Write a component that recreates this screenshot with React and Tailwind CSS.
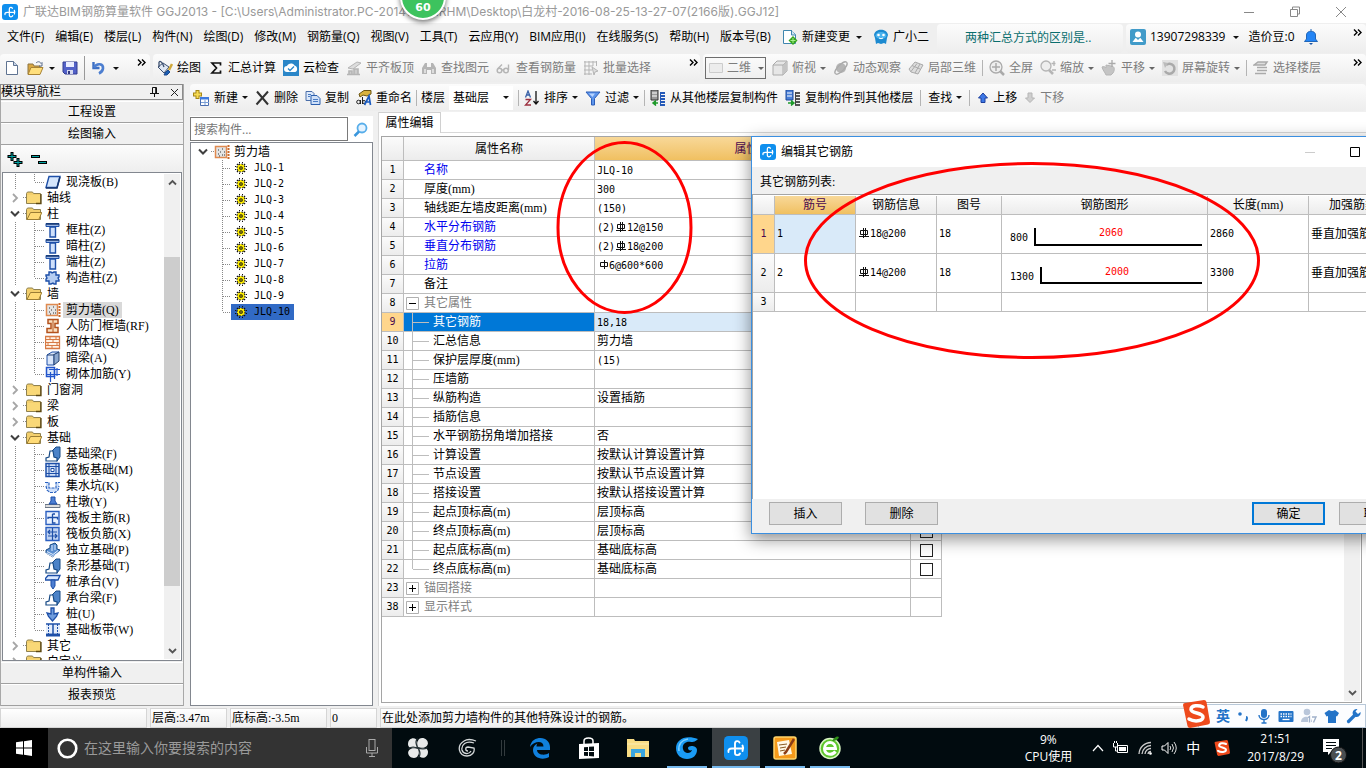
import React from "react";

const UI = "font-['Open_Sans','Noto_Sans_CJK_SC',sans-serif]";
const SONG = "font-['Liberation_Serif','Noto_Sans_CJK_SC',serif]";
const MONO = "font-['DejaVu_Sans_Mono',monospace] text-[10px]";

const isAscii = (s) => /^[\x20-\x7e]*$/.test(s);

/* ---------- shared pieces ---------- */

function Svg({ w = 16, h = 16, children, className = "" }) {
  return (
    <svg width={w} height={h} viewBox={`0 0 ${w} ${h}`} className={`shrink-0 ${className}`} aria-hidden="true">
      {children}
    </svg>
  );
}

const Caret = ({ color = "#111" }) => (
  <Svg w={6} h={3}><path d="M0 0h6L3 3z" fill={color} /></Svg>
);

const More = () => (
  <button aria-label="更多" className="self-start pt-[4px]">
    <Svg w={9} h={7}><path d="M1 .5l3 3-3 3M5 .5l3 3-3 3" fill="none" stroke="#000" strokeWidth="1.400" /></Svg>
  </button>
);

const Sep = ({ className = "" }) => <span className={`h-4 w-px shrink-0 bg-[#b4b4b4] ${className}`} />;

function Tool({ icon, label, caret, disabled }) {
  return (
    <button className={`flex shrink-0 items-center gap-1 whitespace-nowrap ${disabled ? "text-[#7d7d7d]" : "text-black"}`}>
      {icon}
      <span>{label}</span>
      {caret && <Caret color={disabled ? "#666" : "#111"} />}
    </button>
  );
}

function Song({ children, className = "" }) {
  return <span className={`${isAscii(children) ? MONO : SONG} whitespace-pre ${className}`}>{children}</span>;
}

function AppLogo({ s = 16 }) {
  return (
    <svg width={s} height={s} viewBox="0 0 24 24" className="shrink-0" aria-hidden="true">
      <rect width="24" height="24" rx="4.500" fill="#0f8fee" />
      <path d="M15.500 6.500c-.8-2-4.500-2-4.500 1v9.500c0 2.800 4 2.800 5 .5M18.500 12.500H8c-3 0-4 1.500-3.500 3.500M18.500 9.500c.8 1.500.8 4 0 5.500" fill="none" stroke="#fff" strokeWidth="1.900" strokeLinecap="round" />
    </svg>
  );
}

/* ---------- toolbar icons ---------- */

const G = "#b5b5b5";
const I = {
  file: <Svg w={12}><path d="M.5 1.500h7l4 4v9H.5z" fill="#fff" stroke="#5f7391" /><path d="M7.500 1.500v4h4" fill="#c7d4e8" stroke="#5f7391" /></Svg>,
  open: <Svg w={17}><path d="M1 14V4h5l1 2h6v3" fill="#d9a741" stroke="#8d7440" /><path d="M1 14.500l3-7h12l-3 7z" fill="#ffdf7c" stroke="#a88335" /><path d="M9 3c2-2 4-1.500 5 .5l1-1v3.500h-3" fill="none" stroke="#5a6d8c" /></Svg>,
  save: <Svg><path d="M1 2h14v12H3l-2-2z" fill="#5261c8" stroke="#323c91" /><path d="M4 2h8v5H4z" fill="#e9ecff" /><path d="M5 10h6v4H5z" fill="#d5d9f0" /><path d="M6 11h2v3H6z" fill="#333a80" /></Svg>,
  undo: <Svg w={14}><path d="M2.500 2v6h6" fill="none" stroke="#3c6fc4" strokeWidth="2.400" /><path d="M3 7.500C6 2.500 12.500 3.500 12 8.500c-.3 2.500-2 4-4 5" fill="none" stroke="#4c7ed0" strokeWidth="2.600" /></Svg>,
  paint: <Svg><path d="M1 7l5-4 6 4-5 6z" fill="#dfe7f3" stroke="#3b4f70" /><path d="M2 2c2-2 4 2 5 5M2 2v5" fill="none" stroke="#3b4f70" strokeWidth="1.300" /><path d="M8 13l3-3 2 2-3 3H7z" fill="#1c5fb3" stroke="#1c4a8f" /><path d="M15 4l-3 6" stroke="#d0a83a" strokeWidth="2.500" /></Svg>,
  sigma: <Svg><path d="M12.500 5.500V3H4l4.500 5L4 13h8.500v-2.500" fill="none" stroke="#111" strokeWidth="1.700" /></Svg>,
  cloud: <Svg><path d="M0 0h16v16H0z" fill="#2a86c8" /><path d="M4 12a3 3 0 010-6c1-3 6-3.500 7.500-.5C15 6 15 12 12 12z" fill="#fff" /><path d="M5 8.500l2 2 4-4" stroke="#2a86c8" fill="none" strokeWidth="1.300" /></Svg>,
  align: <Svg><path d="M2 8l9-6 4 1-8 6z" fill="#ddd" stroke={G} /><path d="M3 15v-4h3v4M8 15V9h4v6M1 14.500h13" fill="#ccc" stroke={G} strokeWidth="1.600" /></Svg>,
  binoc: <Svg><path d="M1 14V8l3-5h2v4h4V3h2l3 5v6h-5v-4H6v4z" fill={G} /><path d="M3 9h2v4H3zM11 9h2v4h-2z" fill="#ddd" /></Svg>,
  glass: <Svg><circle cx="3.500" cy="10.500" r="2.300" fill="none" stroke={G} strokeWidth="1.500" /><circle cx="10" cy="10.500" r="2.300" fill="none" stroke={G} strokeWidth="1.500" /><path d="M2 8.500l4-4M12.500 10V4.500M6 10h2" fill="none" stroke={G} strokeWidth="1.400" /></Svg>,
  batch: <Svg><path d="M1 2h13M1 6h9M1 10h8M1 14h8M2 1v14M6 1v14M10 1v5M13.500 1v5" stroke={G} fill="none" /><path d="M9 7l6 4-3 1-1 3z" fill="#ddd" stroke={G} /></Svg>,
  cube: <Svg><path d="M1 5l4-4h10v10l-4 4H1z" fill="#e6e6e6" stroke="#aaa" /><path d="M1 5h10v10M11 5l4-4" fill="none" stroke="#aaa" /><path d="M11 5l4-4v10l-4 4z" fill="#c4c4c4" /></Svg>,
  orbit: <Svg><circle cx="8" cy="8" r="5" fill={G} /><ellipse cx="8" cy="8" rx="8" ry="3" transform="rotate(-45 8 8)" fill="none" stroke="#aaa" strokeWidth="1.300" /></Svg>,
  local3d: <Svg><path d="M1 9l6-7 8 3-5 9-7-2z" fill="#ddd" stroke="#aaa" /><path d="M4 5.500l8 3.500M3 11.500l6-8M7 13l5-9" stroke="#aaa" fill="none" /></Svg>,
  full: <Svg><circle cx="7" cy="7" r="6" fill="#eee" stroke="#aaa" strokeWidth="1.300" /><path d="M7 3v8M3 7h8" stroke="#aaa" strokeWidth="1.500" /><path d="M11 11l4 4" stroke="#aaa" strokeWidth="2.500" /></Svg>,
  zoom: <Svg><circle cx="6" cy="6" r="5" fill="#eee" stroke={G} strokeWidth="1.300" /><path d="M9 10l4 4" stroke={G} strokeWidth="2.500" /><path d="M14 1v5M11.500 3.500h4M12 10h4" stroke={G} strokeWidth="1.300" /></Svg>,
  pan: <Svg><path d="M1 7c2-1 3 0 4 1V5l5 1c4 0 4 4 2 7l-2 2H5c-1-3-3-4-4-8z" fill="#c4c4c4" stroke={G} /><path d="M11 0v7M7.500 3.500h7" stroke="#aaa" strokeWidth="1.300" /></Svg>,
  rotate: <Svg><path d="M0 0h16v16H0z" fill="#e2e2e2" /><path d="M4 5a5 5 0 11-1 6" fill="none" stroke="#aaa" strokeWidth="2.500" /><path d="M1 2l5 1-3 5z" fill="#bbb" /></Svg>,
  floors: <Svg><path d="M1 5l4-3h9l-2 3zM4 7.500h10M4 10.500h10M2 13.500h11" fill="#ddd" stroke="#aaa" strokeWidth="1.500" /></Svg>,
  add: <Svg w={17}><path d="M4.500 0v9M0 4.500h9" stroke="#a68716" strokeWidth="4" /><path d="M4.500 1v7M1 4.500h7" stroke="#f7dc55" strokeWidth="2" /><path d="M7.500 7.500h8v8h-8z" fill="#fff" stroke="#496db0" /><path d="M7 7h9v2.500H7z" fill="#3d7ae0" /><path d="M8 12.500h8M12 10v5" stroke="#7b9fd6" /></Svg>,
  del: <Svg w={15}><path d="M2 1.500l11 13M13 1.500L1.500 14.500" stroke="#333" strokeWidth="2" /></Svg>,
  copy: <Svg><path d="M1 1.500h6l2 2v7H1z" fill="#dce9fb" stroke="#4a6ea8" /><path d="M6 5.500h6l3 3v6H6z" fill="#cfe0f8" stroke="#2b5fae" /><path d="M8 9.500h5M8 11.500h5M3 4.500h3M3 6.500h2" stroke="#4a7cc4" /></Svg>,
  rename: <Svg><path d="M3 4l5-3.500h7V4l-4 2-4-1-3 2z" fill="#d8b23f" stroke="#6b5512" /><circle cx="2.500" cy="12" r="1.800" fill="none" stroke="#222" /><path d="M4.500 10v4M6.500 7v7" stroke="#222" /><circle cx="8" cy="12" r="1.500" fill="none" stroke="#222" /><path d="M8.500 15l4.500-9 1.500 9M10.500 12h4" fill="none" stroke="#1b5cc0" strokeWidth="1.700" /></Svg>,
  sort: <Svg><path d="M1.500 7.500L4 1l2.500 6.500M2.500 5h3" fill="none" stroke="#3a62a8" strokeWidth="1.300" /><path d="M1.500 9.500h5L1.500 15h5.500" fill="none" stroke="#9c2f3f" strokeWidth="1.300" /><path d="M12 1v13M9.500 11L12 14l2.500-3" fill="none" stroke="#111" strokeWidth="1.300" /></Svg>,
  filter: <Svg><path d="M1 2h14L9.500 8.500V15h-3V8.500z" fill="#5d95ec" stroke="#2d5eb8" /><path d="M4 3.500h6L7.500 7z" fill="#b8d4ff" /></Svg>,
  copyFrom: <Svg><path d="M1 0h7v10H1z" fill="#999" stroke="#333" /><path d="M2 3h5M2 6h5" stroke="#fff" /><path d="M10 3h5M10 6h5M10 9h5M10 12h5M10 15h5" stroke="#2459b8" strokeWidth="1.800" /><path d="M10.500 2v13" stroke="#2459b8" /><path d="M3 13h5M6 10.500L3 13l3 2.500" stroke="#1e9a2b" fill="#1e9a2b" strokeWidth="1.500" /></Svg>,
  copyTo: <Svg><path d="M1 0h7v10H1z" fill="#4b80d8" stroke="#1c4a9b" /><path d="M2 3h5M2 6h5" stroke="#fff" /><path d="M10 3h5M10 6h5M10 9h5M10 12h5M10 15h5" stroke="#555" strokeWidth="1.800" /><path d="M10.500 2v13" stroke="#444" /><path d="M3 13h5M6 10.500L9 13l-3 2.500" stroke="#1e9a2b" fill="#1e9a2b" strokeWidth="1.500" /></Svg>,
  up: <Svg w={12}><path d="M6 3l4.500 5H8v4.500H4V8H1.500z" fill="#3d78e6" stroke="#1c3f9d" /></Svg>,
  down: <Svg w={12}><path d="M6 12.500L10.500 8H8V3H4v5H1.500z" fill="#cfcfcf" stroke="#b5b5b5" /></Svg>,
};

/* ---------- tree icons ---------- */

const B = "#1d4fa8";
const Folder = ({ open }) => (
  <Svg>
    <path d="M.5 13.500v-10l1-1.500h5l1 1.500h7v10z" fill="#f3cf6d" stroke="#8f814f" />
    {open
      ? <path d="M1 13.500l3.500-7H15.800l-3 7z" fill="#ffdb77" stroke="#9b7d34" />
      : <><path d="M1 5h13v8H1z" fill="#f9d877" /><path d="M10 13.500h5V4" fill="none" stroke="#5d4710" strokeWidth="1.300" /></>}
  </Svg>
);
const wall = (
  <Svg><path d="M1.500 2.500h11v11h-11z" fill="#e4e4e4" stroke="#e08a50" strokeWidth="1.500" /><path d="M14.500 1v14" stroke="#c96a2e" strokeDasharray="2 1" strokeWidth="2" /><path d="M4 6h1M8 5h1M6 8h1M10 8h1M4 10h1M8 11h1M5 12h1M10 11h1" stroke="#333" /></Svg>
);
const column = (
  <Svg><path d="M1 1.500h13v3H1z" fill="#9db8e6" stroke={B} /><path d="M1 2h13" stroke="#17376f" strokeWidth="1.500" /><path d="M5 5h5.500v10H5z" fill="#cfe0fb" stroke={B} strokeWidth="1.400" /></Svg>
);
const strip = (
  <Svg><path d="M4 12l2-6 5-5h4v10l-3 4z" fill="#4c83c8" stroke="#174a85" /><path d="M1 15v-3l3-1 1-6h3l1 6 3 1v3z" fill="#fff" stroke="#174a85" strokeWidth="1.200" /></Svg>
);
const T = {
  slab: <Svg><path d="M4 2.500h11l-3 11H1z" fill="#d5e6fc" stroke={B} strokeWidth="1.400" /><path d="M1 14h11l3-11" fill="none" stroke="#17376f" strokeWidth="1.500" /></Svg>,
  column,
  struct: <Svg><path d="M4 2h2l1 1 2-1h2v3h3v2l-1 1 1 2v1h-3v3H9l-1-1-2 1H4v-3H1V9l1-1-1-2V5h3z" fill="#b5cdf2" stroke={B} strokeWidth="1.400" /></Svg>,
  wall,
  door: <Svg><path d="M3 1.500h10v4h-3v4h3v5H2v-4h4v-5H3z" fill="#fbe0c0" stroke="#b4521d" strokeWidth="1.500" /><path d="M8 2v12" stroke="#b4521d" /></Svg>,
  brick: <Svg><path d="M.5 2.500h14v12H.5z" fill="#fff3e6" stroke="#d77a45" strokeWidth="1.300" /><path d="M1 5.500h14M1 8.500h14M1 11.500h14M5 2v3M11 2v3M8 5v4M3 9v3M12 9v3M7 12v3" stroke="#d77a45" fill="none" /></Svg>,
  beam: <Svg><path d="M2 5l5-3h7l-5 3v10H2z" fill="#d9e6fa" stroke={B} /><path d="M2 5h6l6-3v9l-5 4V5" fill="#8ba7cf" stroke="#24406e" /></Svg>,
  masonry: <Svg><path d="M1.500 1.500h8v9h-8z" fill="#dce9fb" stroke="#2255cc" strokeWidth="1.500" /><path d="M4 3.500h11M1 8.500h14M5.500 6v10M9.500 4v9M12 2v8" fill="none" stroke="#2255cc" strokeWidth="1.200" /></Svg>,
  strip,
  raft: <Svg><path d="M1 1.500h13v13H1z" fill="#cfdff7" stroke={B} strokeWidth="1.500" /><path d="M4 1v14M11 1v14M1 4.500h13M1 11.500h13" stroke={B} /><path d="M6 6.500h3v3H6z" fill="#fff" stroke={B} /></Svg>,
  pit: <Svg><path d="M1 4h3v6h7V4h3v5l-3.500 5h-6L1 9z" fill="#cfe0fa" /><path d="M0 4.500h4v5.500h7V4.500h4M1 8l1 4 3 2.500h5l3-2.500 1-4" fill="none" stroke="#2a62c0" strokeWidth="1.200" strokeDasharray="3 1" /></Svg>,
  pier: <Svg><path d="M0 10.500h15v3H0z" fill="#ddd" stroke="#6a7686" /><path d="M4 10l2-3V3h4v4l2 3z" fill="#4d7fd2" stroke={B} /></Svg>,
  main: <Svg><path d="M1 1.500h13v13H1z" fill="#eaf2ff" stroke="#2b5fc0" strokeWidth="1.400" /><path d="M7.500 4v9h3M3 9V7.500h9.500v2M10 4H7.500" fill="none" stroke={B} strokeWidth="1.300" /></Svg>,
  neg: <Svg><path d="M1 1.500h13v13H1z" fill="#bfd2f2" stroke="#2b5fc0" strokeWidth="1.400" /><path d="M7.500 2v12M3 6h9M3 10h9M5 4L3 6l2 2M10 8l2 2-2 2" fill="none" stroke={B} strokeWidth="1.200" /></Svg>,
  iso: <Svg><path d="M1 8l4-2V3l5-2 2 2v4l3 1-7 7-7-4z" fill="#5b8fd0" stroke="#174a85" /><path d="M1 11l7 3.500L15 9M2 9.500l6 3 5-4" fill="none" stroke="#e6f0ff" /><path d="M7 3v6M10 3v5" stroke="#dbe9ff" /></Svg>,
  cap: <Svg><path d="M0 5l3-3.500h12L13 6H0z" fill="#dbe9ff" stroke={B} strokeWidth="1.300" /><path d="M6 6h4v6l-2 3-2-3z" fill="#4d7fd2" stroke={B} /></Svg>,
  pile: <Svg><path d="M6 2h3v6l4-1-1.500 3.500-4 4.500-4-4.500L2 7l4 1z" fill="#6f9cdd" stroke={B} strokeWidth="1.300" /></Svg>,
  band: <Svg><path d="M1 2h14" stroke={B} strokeWidth="1.500" /><path d="M1 3h14v8H1z" fill="#e4edfb" /><path d="M1 13h14" stroke={B} strokeWidth="3" /><path d="M3.500 2v10M12.500 2v10" stroke={B} strokeDasharray="2 1" /><path d="M8 2v10" stroke={B} strokeWidth="1.500" /></Svg>,
};

const NAV = [
  ["slab", "现浇板(B)", "last"],
  ["+", "轴线"],
  ["-", "柱"],
  ["column", "框柱(Z)"],
  ["column", "暗柱(Z)"],
  ["column", "端柱(Z)"],
  ["struct", "构造柱(Z)", "last"],
  ["-", "墙"],
  ["wall", "剪力墙(Q)", "sel"],
  ["door", "人防门框墙(RF)"],
  ["brick", "砌体墙(Q)"],
  ["beam", "暗梁(A)"],
  ["masonry", "砌体加筋(Y)", "last"],
  ["+", "门窗洞"],
  ["+", "梁"],
  ["+", "板"],
  ["-", "基础"],
  ["strip", "基础梁(F)"],
  ["raft", "筏板基础(M)"],
  ["pit", "集水坑(K)"],
  ["pier", "柱墩(Y)"],
  ["main", "筏板主筋(R)"],
  ["neg", "筏板负筋(X)"],
  ["iso", "独立基础(P)"],
  ["strip", "条形基础(T)"],
  ["cap", "桩承台(V)"],
  ["strip", "承台梁(F)"],
  ["pile", "桩(U)"],
  ["band", "基础板带(W)", "last"],
  ["+", "其它"],
  ["+", "自定义"],
];

const Chevron = ({ open }) => (
  <Svg w={10} h={10}>
    {open
      ? <path d="M1 2.500l4 4 4-4" fill="none" stroke="#404040" strokeWidth="2" />
      : <path d="M3 1l4 4-4 4" fill="none" stroke="#a6a6a6" strokeWidth="1.800" />}
  </Svg>
);

function NavRow({ kind, label, flag }) {
  if (kind === "+" || kind === "-") {
    return (
      <li className="flex h-4 items-center pl-[7px]">
        <Chevron open={kind === "-"} />
        <Svg w={6} h={2}><path d="M3 .5h3" stroke="#888" strokeDasharray="1 1" /></Svg>
        <Folder open={kind === "-"} />
        <Song className="pl-[5px]">{label}</Song>
      </li>
    );
  }
  return (
    <li className="flex h-4 items-center">
      <Svg w={42} h={16}>
        <path d={`M12.500 0v16M31.500 0v${flag === "last" ? 8 : 16}M32 8.500h10`} fill="none" stroke="#888" strokeDasharray="1 1" />
      </Svg>
      {T[kind]}
      <Song className={`ml-[2px] px-[3px] ${flag === "sel" ? "bg-[#d9d9d9]" : ""}`}>{label}</Song>
    </li>
  );
}

/* ---------- panels ---------- */

const BAR = "rounded-sm bg-linear-to-b from-[#fcfcfc] to-[#ededed]";

function TitleBar() {
  return (
    <header className="flex h-[23px] shrink-0 items-center bg-white pl-[2px] text-[#999]">
      <AppLogo />
      <h1 className="flex-1 overflow-hidden pl-[5px] font-['Inter','Noto_Sans_CJK_SC',sans-serif] whitespace-nowrap">
        广联达BIM钢筋算量软件 GGJ2013 - [C:\Users\Administrator.PC-20141127NRHM\Desktop\白龙村-2016-08-25-13-27-07(2166版).GGJ12]
      </h1>
      <div className="flex items-center gap-[34px] pr-[19px]">
        <button aria-label="最小化"><Svg w={12} h={12}><path d="M1 6.500h10" stroke="#888" /></Svg></button>
        <button aria-label="还原"><Svg w={12} h={12}><path d="M1.500 3.500h7v7h-7zM3.500 3V1h7v7H9" fill="none" stroke="#888" /></Svg></button>
        <button aria-label="关闭"><Svg w={12} h={12}><path d="M1 1l10 10M11 1L1 11" stroke="#888" /></Svg></button>
      </div>
    </header>
  );
}

const MENUS = ["文件(F)", "编辑(E)", "楼层(L)", "构件(N)", "绘图(D)", "修改(M)", "钢筋量(Q)", "视图(V)", "工具(T)", "云应用(Y)", "BIM应用(I)", "在线服务(S)", "帮助(H)", "版本号(B)"];

function MenuBar() {
  return (
    <nav className="flex h-[31px] shrink-0 bg-[#efefef]">
      <div className="flex flex-1 items-center justify-between overflow-hidden pr-2 pb-[3px] pl-[7px]">
        {MENUS.map((m) => <button key={m} className="shrink-0 whitespace-nowrap">{m}</button>)}
        <button className="flex shrink-0 items-center gap-1">
          <Svg><path d="M1.500 1.500h8l4 4v9h-12z" fill="#fff" stroke="#3f86ae" /><path d="M9.500 1v5h4" fill="#cfe5f2" stroke="#3f86ae" /><path d="M11 7l4.500 4.500L11 16l-4.500-4.500z" fill="#35a51e" /><path d="M11 9v5M8.500 11.500h5" stroke="#a6ef8c" /></Svg>
          新建变更
          <span className="pl-[2px]"><Caret /></span>
        </button>
        <button className="flex shrink-0 items-center gap-1">
          <Svg><path d="M1 6c1-7 13-7 14 0l-1 3-1 6-2-1-3 1-3-1-2 1-1-6z" fill="#1c8ad0" /><ellipse cx="8" cy="6.500" rx="5.500" ry="3.500" fill="#4cb4ee" /><circle cx="5.500" cy="6" r="1.300" fill="#fff" /><circle cx="10.500" cy="6" r="1.300" fill="#fff" /><path d="M6 9q2 1.500 4 0" stroke="#fff" fill="none" /></Svg>
          广小二
        </button>
      </div>
      <div className={`mt-px mb-px w-[186px] pt-[6px] pl-7 ${BAR}`}>
        <a href="#tip" className="text-[#0a6e6e]">两种汇总方式的区别是..</a>
      </div>
      <div className={`mt-px mb-px ml-[3px] flex w-[240px] items-center pb-[3px] pl-1 ${BAR}`}>
        <Svg><rect width="16" height="16" rx="2" fill="#419bc9" /><circle cx="8" cy="5.500" r="3" fill="#fff" /><path d="M2.500 13l3-4h5l3 4z" fill="#fff" /><path d="M6 9l2 2 2-2" fill="#419bc9" /></Svg>
        <button className="flex items-center gap-2 pl-1">13907298339 <Caret /></button>
        <span className="pl-[9px]">造价豆:0</span>
        <button aria-label="通知" className="pl-2">
          <Svg><path d="M8 0v2M3.500 10V6c0-5 9-5 9 0v4l2 2.500h-13z" fill="#2485f5" stroke="#2166b8" /><path d="M6 14l2 2 2-2z" fill="#1a56a8" /></Svg>
        </button>
        <span className="ml-auto self-start pr-1"><More /></span>
      </div>
    </nav>
  );
}

function MainToolbar() {
  return (
    <div className="flex h-[30px] shrink-0 gap-[3px] bg-[#efefef] pb-[2px]">
      <div className={`flex w-[150px] items-center pl-[6px] ${BAR}`}>
        <button aria-label="新建工程">{I.file}</button>
        <button aria-label="打开" className="flex items-center gap-[5px] pl-[9px]">{I.open}<Caret /></button>
        <button aria-label="保存" className="pl-[7px]">{I.save}</button>
        <span className="mx-[6px] h-6 w-px bg-[#999]" />
        <button aria-label="撤销" className="flex items-center gap-[8px]">{I.undo}<Caret /></button>
        <span className="ml-auto self-start pr-[4px]"><More /></span>
      </div>
      <div className={`flex w-[547px] items-center gap-[7px] pl-1 ${BAR}`}>
        <Tool icon={I.paint} label="绘图" />
        <Tool icon={I.sigma} label="汇总计算" />
        <Tool icon={I.cloud} label="云检查" />
        <Tool icon={I.align} label="平齐板顶" disabled />
        <Tool icon={I.binoc} label="查找图元" disabled />
        <Tool icon={I.glass} label="查看钢筋量" disabled />
        <Tool icon={I.batch} label="批量选择" disabled />
        <span className="ml-auto self-start pr-[2px]"><More /></span>
      </div>
      <div className={`flex min-w-0 flex-1 items-center gap-[7px] pl-[2px] ${BAR}`}>
        <label className="-mr-px flex h-[22px] w-[61px] items-center gap-1 border border-[#6e6e6e] pl-[3px] text-[#7d7d7d]">
          <Svg w={14} h={12}><path d="M.5 1.500h13v9H.5z" fill="#ececec" stroke="#ccc" /></Svg>
          <select aria-label="视图模式" className="w-[27px] appearance-none bg-transparent outline-none"><option>二维</option></select>
          <Caret color="#666" />
        </label>
        <Tool icon={I.cube} label="俯视" caret disabled />
        <Tool icon={I.orbit} label="动态观察" disabled />
        <Tool icon={I.local3d} label="局部三维" disabled />
        <Sep className="-mx-px" />
        <Tool icon={I.full} label="全屏" disabled />
        <Tool icon={I.zoom} label="缩放" caret disabled />
        <Tool icon={I.pan} label="平移" caret disabled />
        <Tool icon={I.rotate} label="屏幕旋转" caret disabled />
        <Sep className="-mx-px" />
        <Tool icon={I.floors} label="选择楼层" disabled />
        <span className="ml-auto self-start pr-1"><More /></span>
      </div>
    </div>
  );
}

function MemberToolbar() {
  return (
    <div className={`flex h-[27px] shrink-0 items-center gap-[7px] pl-[3px] ${BAR}`}>
      <Tool icon={I.add} label="新建" caret />
      <Tool icon={I.del} label="删除" />
      <Tool icon={I.copy} label="复制" />
      <Tool icon={I.rename} label="重命名" />
      <Sep className="-mx-[3px]" />
      <label className="flex items-center gap-1 whitespace-nowrap">
        楼层
        <span className="flex h-6 items-center bg-white pr-1 pl-1">
          <select className="w-[50px] appearance-none bg-transparent outline-none"><option>基础层</option></select>
          <Caret />
        </span>
      </label>
      <Sep className="-mx-[2px]" />
      <Tool icon={I.sort} label="排序" caret />
      <Tool icon={I.filter} label="过滤" caret />
      <Sep className="-mx-[2px]" />
      <Tool icon={I.copyFrom} label="从其他楼层复制构件" />
      <Tool icon={I.copyTo} label="复制构件到其他楼层" />
      <Sep />
      <Tool label="查找" caret />
      <Sep />
      <Tool icon={I.up} label="上移" />
      <Tool icon={I.down} label="下移" disabled />
    </div>
  );
}

const SideButton = ({ children }) => (
  <button className={`h-[22px] w-full shrink-0 border-b border-[#a0a0a0] border-t border-t-white bg-[#f0f0f0] ${SONG}`}>{children}</button>
);

function SidePanel() {
  return (
    <aside className="flex w-[184px] shrink-0 flex-col border-r border-[#a8a8a8]">
      <div className="flex h-4 shrink-0 items-center border border-[#8a8a8a]">
        <h2 className={`flex-1 ${SONG}`}>模块导航栏</h2>
        <button aria-label="固定" className="pr-[11px]"><Svg w={9} h={10}><path d="M2.500 6V.5h4V6M0 6.500h9M4.500 7v3M5.700 1v5" fill="none" stroke="#111" /></Svg></button>
        <button aria-label="关闭面板" className="pr-[3px]"><Svg w={9} h={9}><path d="M1 1l7 7M8 1L1 8" stroke="#222" /></Svg></button>
      </div>
      <div className="flex min-h-0 flex-1 flex-col border-l border-[#a8a8a8] pt-px">
        <SideButton>工程设置</SideButton>
        <SideButton>绘图输入</SideButton>
        <div className="flex h-[27px] shrink-0 items-center gap-[7px] bg-linear-to-b from-[#fcfcfc] to-[#eee] pl-[6px]">
          <button aria-label="全部展开">
            <Svg w={17}><path d="M5 1v9M.5 5.500h9M11 7v9M6.500 11.500h9" stroke="#000" strokeWidth="3" /><path d="M5 2v7M1.500 5.500h7M11 8v7M7.500 11.500h7" stroke="#00a3a3" /></Svg>
          </button>
          <button aria-label="全部折叠">
            <Svg w={17}><path d="M0 5.500h9M7 11.500h9" stroke="#000" strokeWidth="3" /><path d="M1 5.500h7M8 11.500h7" stroke="#00a3a3" /></Svg>
          </button>
        </div>
        <div className="mx-px mb-px flex min-h-0 flex-1 border border-[#82878f] bg-white">
          <ul className="min-w-0 flex-1 overflow-hidden pt-px">
            {NAV.map(([k, l, f]) => <NavRow key={l} kind={k} label={l} flag={f} />)}
          </ul>
          <div className="m-px flex w-4 flex-col items-center bg-[#f0f0f0] py-1">
            <Svg w={9} h={9}><path d="M1 6.500L4.500 3 8 6.500" fill="none" stroke="#555" strokeWidth="1.800" /></Svg>
            <div className="h-[70px]" />
            <div className="h-[329px] w-full bg-[#cdcdcd]" />
            <Svg w={9} h={9} className="mt-auto"><path d="M1 3l3.500 3.500L8 3" fill="none" stroke="#555" strokeWidth="1.800" /></Svg>
          </div>
        </div>
        <SideButton>单构件输入</SideButton>
        <SideButton>报表预览</SideButton>
      </div>
    </aside>
  );
}

const Gear = () => (
  <Svg w={12} h={12}>
    <path d="M4 .5h1M7 .5h1M.5 4v1M.5 7v1M11.500 4v1M11.500 7v1M4 11.500h1M7 11.500h1M2 2l1 1M10 2L9 3M2 10l1-1M10 10L9 9" stroke="#111" strokeWidth="1.400" />
    <circle cx="6" cy="6" r="4" fill="#ffee00" stroke="#222" strokeWidth="1.200" strokeDasharray="1.600 1.540" />
    <circle cx="6" cy="6" r="1.300" fill="#ffee00" stroke="#111" strokeWidth="1.100" />
  </Svg>
);

function MemberList() {
  return (
    <section className="flex w-[183px] shrink-0 flex-col pt-1">
      <div className="flex h-[26px] shrink-0 items-center bg-white">
        <input aria-label="搜索构件" placeholder="搜索构件..." className={`h-6 w-[158px] border border-[#7a7a7a] bg-white px-[3px] text-[#333] placeholder-[#777] outline-none ${UI}`} />
        <button aria-label="搜索" className="mx-auto">
          <Svg w={15} h={15}><circle cx="9" cy="6" r="4.500" fill="#e5f3ff" stroke="#58aeea" strokeWidth="1.800" /><path d="M6 9.500l-4.500 4.500" stroke="#3a97dd" strokeWidth="2.500" /></Svg>
        </button>
      </div>
      <div className="min-h-0 flex-1 border border-[#82878f] bg-white pt-px">
        <div className="flex h-4 items-center pl-[7px]">
          <Chevron open />
          <Svg w={6} h={2}><path d="M3 .5h3" stroke="#888" strokeDasharray="1 1" /></Svg>
          {wall}
          <Song className="pl-1">剪力墙</Song>
        </div>
        <ul>
          {Array.from({ length: 10 }, (_, i) => (
            <li key={i} className="flex h-4 items-center">
              <Svg w={40}><path d={`M31.500 0v${i === 9 ? 8 : 16}M32 8.500h8`} stroke="#888" strokeDasharray="1 1" fill="none" /></Svg>
              <button className={`flex h-4 items-center gap-[7px] px-1 ${i === 9 ? "bg-[#316ac5]" : ""}`}>
                <Gear />
                <Song>{`JLQ-${i + 1}`}</Song>
              </button>
            </li>
          ))}
        </ul>
      </div>
    </section>
  );
}

/* Rebar grade marks: plain bar (one stem) and ribbed bar (two stems and a foot). */
function Rebar({ ribbed }) {
  return (
    <Svg w={12} h={12} className="inline-block align-[-2px]">
      {ribbed
        ? <path d="M2.500 3.500h7v4h-7zM5.500 1v10M7.500 1v8M1 9.500h10" stroke="#111" fill="none" />
        : <path d="M3.500 3.500h7v4h-7zM7.500 1v9" fill="none" stroke="#111" />}
    </Svg>
  );
}

const ROWS = [
  [1, "名称", "JLQ-10", "blue"],
  [2, "厚度(mm)", "300"],
  [3, "轴线距左墙皮距离(mm)", "(150)"],
  [4, "水平分布钢筋", <>(2)<Rebar ribbed />12@150</>, "blue"],
  [5, "垂直分布钢筋", <>(2)<Rebar ribbed />18@200</>, "blue"],
  [6, "拉筋", <><Rebar />6@600*600</>, "blue"],
  [7, "备注", ""],
  [8, "其它属性", "", "minus"],
  [9, "其它钢筋", "18,18", "sub"],
  [10, "汇总信息", "剪力墙", "sub"],
  [11, "保护层厚度(mm)", "(15)", "sub"],
  [12, "压墙筋", "", "sub"],
  [13, "纵筋构造", "设置插筋", "sub"],
  [14, "插筋信息", "", "sub"],
  [15, "水平钢筋拐角增加搭接", "否", "sub"],
  [16, "计算设置", "按默认计算设置计算", "sub"],
  [17, "节点设置", "按默认节点设置计算", "sub"],
  [18, "搭接设置", "按默认搭接设置计算", "sub"],
  [19, "起点顶标高(m)", "层顶标高", "sub"],
  [20, "终点顶标高(m)", "层顶标高", "sub"],
  [21, "起点底标高(m)", "基础底标高", "sub"],
  [22, "终点底标高(m)", "基础底标高", "sub"],
  [23, "锚固搭接", "", "plus"],
  [38, "显示样式", "", "plus"],
];

const CELL = "border-r border-b border-[#bdbdbd] p-0";
const HEAD = "bg-linear-to-b from-[#fbfbfb] to-[#ececec] font-normal";
const HOT = "bg-linear-to-b from-[#f8d898] to-[#f0c060] font-normal text-[#4a0a50]";

function PropertyTable() {
  return (
    <table className={`w-[560px] table-fixed border-separate border-spacing-0 leading-4 ${SONG}`}>
      <colgroup>
        <col className="w-[22px]" /><col className="w-[191px]" /><col className="w-[316px]" /><col className="w-[31px]" />
      </colgroup>
      <thead>
        <tr className="h-6">
          <th className={`${CELL} ${HEAD}`} />
          <th className={`${CELL} ${HEAD}`}>属性名称</th>
          <th className={`${CELL} ${HOT}`}>属性值</th>
          <th className={`${CELL} ${HEAD}`}>附加</th>
        </tr>
      </thead>
      <tbody>
        {ROWS.map(([n, name, value, kind]) => {
          const active = n === 9;
          const group = kind === "minus" || kind === "plus";
          return (
            <tr key={n} className="h-[19px]">
              <th className={`${CELL} text-center ${active ? "bg-[#ffd68c] font-normal text-[#4a0a50]" : HEAD} ${MONO}`}>{n}</th>
              <td className={`${CELL} ${active ? "bg-[#0078d7] text-white" : kind === "blue" ? "text-[#0000f0]" : group ? "text-[#808080]" : ""}`}>
                <div className="flex h-[18px] items-center">
                  {kind === "sub" && (
                    <Svg w={29} h={18}>
                      <path d={`M8.500 0v${n === 22 ? 9 : 18}M9 9.500h16`} fill="none" stroke="#bdbdbd" />
                    </Svg>
                  )}
                  {group && (
                    <button aria-label="展开或折叠" className="pr-[5px] pl-[2px]">
                      <Svg w={13} h={13}><path d="M.5 .5h12v12H.5z" fill="#fff" stroke="#b0b0b0" /><path d={kind === "plus" ? "M3 6.500h7M6.500 3v7" : "M3 6.500h7"} stroke="#000" /></Svg>
                    </button>
                  )}
                  {!group && kind !== "sub" && <span className="w-5" />}
                  <span>{name}</span>
                </div>
              </td>
              <td className={`${CELL} pl-[2px] ${active ? "bg-[#d9eaf9]" : ""}`}>
                {typeof value === "string" ? <Song>{value}</Song> : <span className={MONO}>{value}</span>}
              </td>
              <td className={`${CELL} text-center align-middle`}>
                {!group && n !== 1 && (
                  <input type="checkbox" aria-label={`附加 ${name}`} className="mx-auto block size-[13px] appearance-none border border-[#222] bg-white" />
                )}
              </td>
            </tr>
          );
        })}
      </tbody>
    </table>
  );
}

function PropertyPanel() {
  return (
    <main className="flex min-w-0 flex-1 flex-col border-l border-[#d8d8d8] bg-white">
      <div className="flex h-[21px] shrink-0" role="tablist">
        <button role="tab" aria-selected="true" className={`w-[62px] border-t border-r border-[#d0d0d0] ${SONG}`}>属性编辑</button>
        <div className="flex-1 border-b border-[#d8d8d8]" />
      </div>
      <div className="mt-[3px] mr-1 mb-[3px] ml-[2px] flex min-h-0 flex-1 border border-[#a5a5a5]">
        <div className="min-w-0 flex-1 overflow-hidden"><PropertyTable /></div>
        <div className="m-px flex w-4 flex-col items-center justify-end bg-[#f0f0f0] pb-1">
          <Svg w={9} h={9}><path d="M1 3l3.500 3.500L8 3" fill="none" stroke="#555" strokeWidth="1.800" /></Svg>
        </div>
      </div>
    </main>
  );
}

function StatusBar() {
  const box = `border border-[#d5d5d5] bg-linear-to-b from-white to-[#efefef] px-px leading-[18px] ${SONG}`;
  return (
    <footer className="flex h-[22px] shrink-0 gap-[3px] bg-[#f0f0f0] pt-[2px] whitespace-nowrap">
      <div className={`w-[147px] ${box}`} />
      <div className={`w-[77px] ${box}`}>层高:3.47m</div>
      <div className={`w-[97px] ${box}`}>底标高:-3.5m</div>
      <div className={`w-[47px] ${box}`}>0</div>
      <div className={`flex-1 ${box}`}>在此处添加剪力墙构件的其他特殊设计的钢筋。</div>
    </footer>
  );
}

/* ---------- dialog ---------- */

function BarShape({ side, len, x, bottom }) {
  return (
    <svg width="204" height="38" className="block font-['DejaVu_Sans_Mono',monospace] text-[10px]">
      <text x="8" y="26">{side}</text>
      <text x={x + 76} y="21" fill="#f00" textAnchor="middle">{len}</text>
      <path d={`M${x} 13V${bottom}H200`} fill="none" stroke="#000" strokeWidth="2" />
    </svg>
  );
}

const BTN = "h-[23px] w-[73px] border bg-[#e1e1e1]";

function RebarDialog() {
  return (
    <div role="dialog" aria-labelledby="dlg-title" className="absolute top-[136px] -right-[60px] left-[751px] flex h-[398px] flex-col border border-[#3b8fe0] bg-[#f0f0f0] shadow-[0_5px_16px_rgba(0,0,0,0.45)]">
      <div className="flex h-[30px] shrink-0 items-center bg-white pl-2">
        <AppLogo />
        <h2 id="dlg-title" className="flex-1 pl-[5px]">编辑其它钢筋</h2>
        <button aria-label="最小化对话框"><Svg w={12} h={12}><path d="M1 6.500h10" stroke="#ccc" /></Svg></button>
        <button aria-label="最大化对话框" className="pr-[64px] pl-[33px]"><Svg w={12} h={12}><path d="M1.500 1.500h9v9h-9z" fill="none" stroke="#000" /></Svg></button>
      </div>
      <p className={`h-[27px] shrink-0 pt-[7px] pl-2 ${SONG}`}>其它钢筋列表:</p>
      <div className="min-h-0 flex-1 overflow-hidden border-t border-l border-[#a5a5a5] bg-white pt-px">
        <table className={`w-[677px] table-fixed border-separate border-spacing-0 leading-4 ${SONG}`}>
          <colgroup>
            <col className="w-[22px]" /><col className="w-[81px]" /><col className="w-[81px]" /><col className="w-[65px]" />
            <col className="w-[206px]" /><col className="w-[101px]" /><col className="w-[121px]" />
          </colgroup>
          <thead>
            <tr className="h-[19px]">
              <th className={`${CELL} ${HEAD}`} />
              <th className={`${CELL} ${HOT}`}>筋号</th>
              {["钢筋信息", "图号", "钢筋图形", "长度(mm)"].map((h) => <th key={h} className={`${CELL} ${HEAD}`}>{h}</th>)}
              <th className={`${CELL} ${HEAD} pl-5 text-left`}>加强筋类型</th>
            </tr>
          </thead>
          <tbody>
            {[
              [1, "18@200", <BarShape side="800" len="2060" x={33} bottom={30} />, "2860"],
              [2, "14@200", <BarShape side="1300" len="2000" x={39} bottom={29} />, "3300"],
            ].map(([n, info, shape, length]) => (
              <tr key={n} className="h-[39px]">
                <th className={`${CELL} text-center ${n === 1 ? "bg-[#ffd68c] font-normal text-[#4a0a50]" : HEAD} ${MONO}`}>{n}</th>
                <td className={`${CELL} pl-[2px] ${MONO} ${n === 1 ? "bg-[#d9eaf9]" : ""}`}>{n}</td>
                <td className={`${CELL} pl-[2px] ${MONO}`}><Rebar ribbed />{info}</td>
                <td className={`${CELL} pl-[2px] ${MONO}`}>18</td>
                <td className={CELL}>{shape}</td>
                <td className={`${CELL} pl-[2px] ${MONO}`}>{length}</td>
                <td className={`${CELL} pl-[2px]`}>垂直加强筋</td>
              </tr>
            ))}
            <tr className="h-[19px]">
              <th className={`${CELL} ${HEAD} text-center ${MONO}`}>3</th>
              {[0, 1, 2, 3, 4, 5].map((i) => <td key={i} className={CELL} />)}
            </tr>
          </tbody>
        </table>
      </div>
      <div className={`flex h-[34px] shrink-0 items-start pt-[3px] pl-[17px] ${SONG}`}>
        <button className={`${BTN} border-[#adadad]`}>插入</button>
        <button className={`${BTN} ml-[23px] border-[#adadad]`}>删除</button>
        <button className="ml-auto h-[23px] w-[73px] border-2 border-[#0078d7] bg-[#e1e1e1]">确定</button>
        <button className={`${BTN} mr-[13px] ml-[14px] border-[#adadad]`}>取消</button>
      </div>
    </div>
  );
}

/* ---------- input-method bar and taskbar ---------- */

const Sogou = ({ s }) => (
  <svg width={s} height={s} viewBox="0 0 28 28" className="shrink-0" aria-hidden="true">
    <path d="M1 5Q1 3 3 3L22 0q2 0 2.500 2L28 22q0 2-2 2.500L8 28q-2 0-2.500-2z" fill="#ee4a1c" />
    <path d="M21 7c-4-2-12-2-12 2.500 0 4 12 3 12 7.500s-9 5-14 2" fill="none" stroke="#fff" strokeWidth="3.500" strokeLinecap="round" />
  </svg>
);

function ImeBar() {
  return (
    <div className="absolute right-0 bottom-[40px] flex h-[27px] items-end">
      <div className="z-10 -mr-3"><Sogou s={28} /></div>
      <div className="flex h-6 items-center gap-[7px] border border-[#b8c8d8] bg-[#fcfdff] pr-1 pl-[17px] text-[#2474c8]">
        <button className="text-[14px] leading-5 font-bold">英</button>
        <Svg w={12}><circle cx="3" cy="6" r="1.800" fill="#2474c8" /><path d="M9 9q2 0 0 4" stroke="#2474c8" strokeWidth="2" fill="none" /></Svg>
        <Svg w={15}><rect x="5" y="1" width="6" height="9" rx="3" fill="#2474c8" /><path d="M3 7c0 6 10 6 10 0M8 12v3M5.500 15h5" fill="none" stroke="#2474c8" strokeWidth="1.400" /></Svg>
        <Svg><rect x=".5" y="3" width="15" height="11" rx="1" fill="#2474c8" /><path d="M2.500 6h11M2.500 8.500h11" stroke="#fff" strokeDasharray="1.500 1" strokeWidth="1.300" /><path d="M4.500 11.500h7" stroke="#fff" strokeWidth="1.300" /></Svg>
        <Svg><circle cx="6" cy="4" r="3.300" fill="#b9c6da" /><path d="M0 14c0-7 11-7 11 0z" fill="#b9c6da" /><path d="M7 9.500l1.500-1v6M11 9h4l-2.500 5.500" fill="none" stroke="#fff" strokeWidth="3" /><path d="M7 9.500l1.500-1v6M11 9h4l-2.500 5.500" fill="none" stroke="#9fb0ca" strokeWidth="1.400" /></Svg>
        <Svg w={15}><path d="M5 2q3 2 6 0l4 3-2 3.500L12 8v7H4V8l-1.500.5-2-3.500z" fill="#2474c8" /></Svg>
        <Svg w={15}><path d="M2.500 13.500l7-7" stroke="#2474c8" strokeWidth="3.200" strokeLinecap="round" /><path d="M14.500 4l-2.500 2-2.500-2.500L11.500 1a4 4 0 103 3z" fill="#2474c8" /></Svg>
      </div>
    </div>
  );
}

function TaskIcon({ label, children, line, active, width = "w-10" }) {
  return (
    <button aria-label={label} className={`relative flex h-10 shrink-0 items-center justify-center ${width} ${active ? "bg-[#3a4043]" : ""}`}>
      {children}
      {line && <span className="absolute right-0 bottom-0 left-0 h-[2px] bg-[#76b9ed]" />}
    </button>
  );
}

function Taskbar() {
  return (
    <div className="flex h-10 shrink-0 items-center bg-[#010b0f] text-white">
      <button aria-label="开始" className="flex h-10 w-12 items-center justify-center bg-black">
        <Svg><path d="M0 2.300L7 1.300v6.200H0zM8 1.200L16 0v7.500H8zM0 8.500h7v6.200l-7-1zM8 8.500h8V16l-8-1.200z" fill="#fff" /></Svg>
      </button>
      <label className="flex h-10 w-[344px] shrink-0 items-center bg-[#333] pl-[9px]">
        <Svg w={21} h={21}><circle cx="10.500" cy="10.500" r="8.800" fill="none" stroke="#fff" strokeWidth="2.600" /></Svg>
        <input aria-label="搜索" placeholder="在这里输入你要搜索的内容" className="min-w-0 flex-1 bg-transparent pl-[6px] text-[14px] placeholder-[#9a9a9a] outline-none" />
        <Svg w={12} h={18} className="mr-[14px]"><rect x="3" y=".5" width="6" height="11" fill="none" stroke="#aaa" /><path d="M.5 8v6h11V8M6 14v3.500M3 17.500h6" fill="none" stroke="#aaa" /></Svg>
      </label>
      <div className="flex items-center gap-[9px] pl-[6px]">
        <TaskIcon label="应用">
          <Svg w={22} h={22}><g fill="#e8eaea"><path d="M10.500 10.500C8 12.500 1 12 1 7c0-7 9-8 9.500-1.500z" /><path d="M11.500 10.500C9.500 8 10 1 15 1c7 0 8 9 1.500 9.500z" /><path d="M11.500 11.500C14 9.500 21 10 21 15c0 7-9 8-9.500 1.500z" /><path d="M10.500 11.500C12.500 14 12 21 7 21c-7 0-8-9-1.500-9.500z" /></g><path d="M10.500 1.500c-3 3-1 6.500 0 9 3 1.500 7 2 10 0M11.500 20.500c3-3 1-6.500 0-9-3-1.500-7-2-10 0" fill="none" stroke="#233034" strokeWidth="1.300" /></Svg>
        </TaskIcon>
        <TaskIcon label="广联达 G+">
          <Svg w={20} h={20}><path d="M19 3c-5-2-9-2-12 0-8 5-5 15 3 15 5 0 8-4 7-8l-6-1c-3 0-3 4 0 4M17 5C9 2 4 7 5 12c1 4 7 5 9 1" fill="none" stroke="#d5d9da" strokeWidth="1.300" /></Svg>
        </TaskIcon>
      </div>
      <Svg w={6} h={16} className="mr-[14px] ml-[13px]"><path d="M1.500 0v16M4.500 0v16" stroke="#333b3e" /></Svg>
      <div className="flex items-center gap-[9px]">
        <TaskIcon label="Edge">
          <Svg w={22} h={22}><path d="M1 10C2 3 7 1 11.500 1 17 1 21 5 21 10v3H8c0 5 8 6 12 3v4c-6 3.500-16 1.500-16-7 0-3 2-5.500 4.500-6.500C7.500 7.500 7.500 9 7.500 9.500h7C14.500 3 5 4 1 10z" fill="#1080dd" /></Svg>
        </TaskIcon>
        <TaskIcon label="应用商店">
          <Svg w={22} h={23}><path d="M1 7l20-1v15l-20 1z" fill="#fff" /><path d="M6 8V4c0-4 9-4 9 0v3" fill="none" stroke="#fff" strokeWidth="1.500" /><path d="M6 10.300l4-.4v4H6zM11 9.800l5-.4v4.500h-5zM6 15h4v4l-4-.3zM11 15h5v4.500l-5-.4z" fill="#010b0f" /></Svg>
        </TaskIcon>
        <TaskIcon label="文件资源管理器">
          <Svg w={22} h={20}><path d="M0 1h7l1 2h14v16H0z" fill="#f9dd84" /><path d="M0 6h22" stroke="#fcedb4" /><path d="M4 19v-8h14v8h-4v-4H8v4z" fill="#3aa6e0" /></Svg>
        </TaskIcon>
        <TaskIcon label="广联达" line>
          <Svg w={24} h={24}><path d="M23 3c-3 3-5 3-7 3-6-1-9 3-8 7 1 5 8 5 9 1-2 1-4 0-4-2 0-3 9-3 9 2 0 5-4 9-10 9S1 19 1 12C1 4 10-2 23 3z" fill="#1a9bf4" /><path d="M4 15c-1-7 3-11 9-12" stroke="#7ed0ff" fill="none" strokeWidth="1.500" /></Svg>
        </TaskIcon>
      </div>
      <div className="flex items-center gap-[5px] pl-[5px]">
        <TaskIcon label="GGJ2013" line active width="w-12"><AppLogo s={24} /></TaskIcon>
        <TaskIcon label="笔记" line>
          <Svg w={24} h={24}><rect x="1" y="1" width="22" height="22" rx="2" fill="#f59a1b" stroke="#ffd56b" strokeWidth="1.500" /><path d="M4 6l12-2 3 14-13 2z" fill="#fff8e6" /><path d="M6 9l8-1M7 12l6-1M7 15l5-1" stroke="#8a5a23" /><path d="M21 3l-8 13-2 2" fill="none" stroke="#8b3d16" strokeWidth="2.500" /></Svg>
        </TaskIcon>
        <TaskIcon label="浏览器" line>
          <Svg w={24} h={24}><circle cx="12" cy="12.500" r="10" fill="#5fc72d" stroke="#d9f5c4" strokeWidth="1.500" /><path d="M6 12.500h11.500c0-8-11-8-11 0 0 7 8 7 11 3" fill="none" stroke="#fff" strokeWidth="3" /><path d="M14 5q4-6 7-4-1 4-7 4z" fill="#2f8f18" /></Svg>
        </TaskIcon>
      </div>
      <div className="ml-auto flex shrink-0 items-center text-center whitespace-nowrap">
        <div className="mr-[20px] leading-[17px]">9%<br />CPU使用</div>
        <div className="flex items-center gap-[9px]">
          <Svg w={12} h={12}><path d="M1 9l5-5.500L11 9" fill="none" stroke="#fff" strokeWidth="1.200" /></Svg>
          <Svg w={16} h={14}><path d="M4.500 4.500h10v7h-10z" fill="none" stroke="#fff" /><path d="M6 6h7v4H6z" fill="#fff" /><path d="M.5 2v4h4V2M1.500 0v2M3.500 0v2M2.500 6v4h2" stroke="#fff" fill="none" /></Svg>
          <Svg w={14} h={14}><path d="M1 13A12 12 0 0113 1.500M4 13a9 9 0 019-8.500M7 13a6 6 0 016-5.500M10 13a3 3 0 013-2.500" fill="none" stroke="#ccc" strokeWidth="1.300" /><circle cx="12.500" cy="12.500" r="1.300" fill="#fff" /></Svg>
          <Svg w={16} h={14}><path d="M1 5h2.500L7 1.500v11L3.500 9H1z" fill="none" stroke="#fff" /><path d="M9 5q1.500 2 0 4M11 3q3 4 0 8M13 1q4.500 6 0 12" fill="none" stroke="#ddd" /></Svg>
          <span className="text-[14px]">中</span>
        </div>
        <span className="ml-[14px]"><Sogou s={16} /></span>
        <div className="ml-[17px] leading-[18px]">21:51<br />2017/8/29</div>
        <button aria-label="操作中心" className="ml-[18px] pt-1 pr-[14px]">
          <Svg w={26} h={28}><path d="M1 3h16v13H9l-3 3v-3H1z" fill="#fff" /><path d="M4 6.500h10M4 9.500h10M4 12.500h6" stroke="#010b0f" /><circle cx="16.500" cy="19" r="8" fill="#4a4f52" stroke="#111" /><text x="16.500" y="23.500" fontSize="12" fill="#fff" textAnchor="middle" fontWeight="bold">2</text></Svg>
        </button>
      </div>
      <span className="h-10 w-1 border-l border-[#555]" />
    </div>
  );
}

export default function App() {
  return (
    <div className={`relative flex h-screen flex-col overflow-hidden bg-[#f0f0f0] text-[12px] leading-4 text-black ${UI}`}>
      <TitleBar />
      <MenuBar />
      <MainToolbar />
      <div className="flex min-h-0 flex-1 gap-[6px]">
        <SidePanel />
        <div className="flex min-w-0 flex-1 flex-col">
          <MemberToolbar />
          <div className="flex min-h-0 flex-1 gap-[5px] pt-px">
            <MemberList />
            <PropertyPanel />
          </div>
        </div>
      </div>
      <StatusBar />
      <Taskbar />

      <div className="absolute -top-[26px] left-[400px] flex size-[46px] items-end justify-center rounded-full border-2 border-white bg-[#3dc35e] pb-[2px] shadow-[0_2px_5px_rgba(0,0,0,0.55)]">
        <span className="font-['DejaVu_Sans',sans-serif] text-[11px] leading-4 font-bold text-white">60</span>
      </div>
      <RebarDialog />
      <svg className="pointer-events-none absolute inset-0 h-full w-full" aria-hidden="true">
        <g fill="none" stroke="#f00" strokeWidth="3">
          <ellipse cx="624.500" cy="227.500" rx="66.500" ry="85" />
          <ellipse cx="1032" cy="260.500" rx="226.500" ry="97" />
        </g>
      </svg>
      <ImeBar />
    </div>
  );
}
